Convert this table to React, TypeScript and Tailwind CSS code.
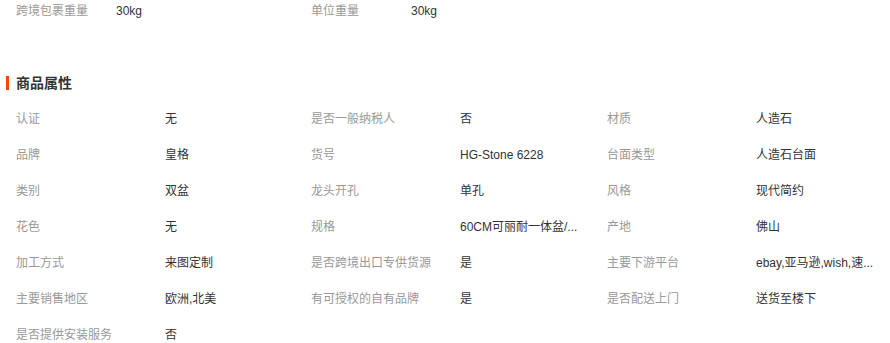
import React from "react";

const font = {
	fontFamily: '"Liberation Sans", "Noto Sans CJK SC", sans-serif',
};

const attrs: [string, string][] = [
	["认证", "无"],
	["是否一般纳税人", "否"],
	["材质", "人造石"],
	["品牌", "皇格"],
	["货号", "HG-Stone 6228"],
	["台面类型", "人造石台面"],
	["类别", "双盆"],
	["龙头开孔", "单孔"],
	["风格", "现代简约"],
	["花色", "无"],
	["规格", "60CM可丽耐一体盆/..."],
	["产地", "佛山"],
	["加工方式", "来图定制"],
	["是否跨境出口专供货源", "是"],
	["主要下游平台", "ebay,亚马逊,wish,速..."],
	["主要销售地区", "欧洲,北美"],
	["有可授权的自有品牌", "是"],
	["是否配送上门", "送货至楼下"],
	["是否提供安装服务", "否"],
];

export default function App() {
	return (
		<div className="h-[343px] w-[890px] overflow-hidden bg-white" style={font}>
			<div className="flex h-[22px] items-center text-[12px]">
				<div className="flex w-[311px] items-center pl-4">
					<span className="w-[100px] text-[#999]">跨境包裹重量</span>
					<span className="text-[#333]">30kg</span>
				</div>
				<div className="flex items-center">
					<span className="w-[100px] text-[#999]">单位重量</span>
					<span className="text-[#333]">30kg</span>
				</div>
			</div>

			<div className="mt-[50px] flex h-[22px] items-center">
				<span className="ml-[6px] h-[14px] w-[3px] bg-[#ff4400]" />
				<span className="ml-[7px] text-[14px] font-bold text-[#333]">商品属性</span>
			</div>

			<div className="mt-[7px] grid grid-cols-[295px_296px_299px]">
				{attrs.map(([label, value]) => (
					<div key={label} className="flex h-[36px] items-center pl-4 text-[12px]">
						<span className="w-[149px] shrink-0 whitespace-nowrap text-[#999]">{label}</span>
						<span className="whitespace-nowrap text-[#333]">{value}</span>
					</div>
				))}
			</div>
		</div>
	);
}
